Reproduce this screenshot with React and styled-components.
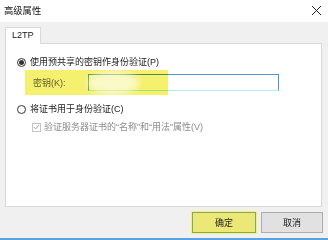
import React from 'react';
import styled, { createGlobalStyle } from 'styled-components';

const GlobalStyle = createGlobalStyle`
  html, body {
    margin: 0;
    padding: 0;
    background: #f0f0f0;
  }
  body {
    font-family: "Liberation Sans", "Noto Sans CJK SC", sans-serif;
    font-size: 9px;
    color: #222;
  }
`;

function App() {
  return (
    <Window>
      <GlobalStyle />
      <TitleBar>
        <Title>高级属性</Title>
        <CloseIcon width="11" height="11" viewBox="0 0 11 11">
          <path d="M1 1 L10 10 M10 1 L1 10" stroke="#222" strokeWidth="1" />
        </CloseIcon>
      </TitleBar>
      <Body>
        <TabStrip>
          <Tab>L2TP</Tab>
        </TabStrip>
        <Panel>
          <OptionRow>
            <Radio checked />
            <Label>使用预共享的密钥作身份验证(P)</Label>
          </OptionRow>
          <KeyRow>
            <KeyLabel>密钥(K):</KeyLabel>
            <KeyInput />
            <Blur />
            <Highlight />
          </KeyRow>
          <OptionRow $gap={9}>
            <Radio />
            <Label>将证书用于身份验证(C)</Label>
          </OptionRow>
          <CheckRow>
            <CheckBox>
              <svg width="8" height="8" viewBox="0 0 8 8">
                <path d="M1 4 L3 6.2 L7 1.5" fill="none" stroke="#9a9a9a" strokeWidth="1" />
              </svg>
            </CheckBox>
            <Label $disabled>验证服务器证书的“名称”和“用法”属性(V)</Label>
          </CheckRow>
        </Panel>
        <Footer>
          <Button $primary>确定</Button>
          <Button>取消</Button>
        </Footer>
      </Body>
      <BlueLine />
    </Window>
  );
}

export default App;

const Window = styled.div`
  width: 328px;
  height: 240px;
  display: flex;
  flex-direction: column;
  background: #f0f0f0;
  overflow: hidden;
`;

const TitleBar = styled.div`
  height: 22px;
  background: #fff;
  display: flex;
  align-items: center;
  justify-content: space-between;
  padding: 0 6px 2px 4px;
  box-sizing: border-box;
`;

const Title = styled.span`
  font-size: 9.3px;
  color: #111;
`;

const CloseIcon = styled.svg`
  display: block;
`;

const Body = styled.div`
  flex: 1;
  display: flex;
  flex-direction: column;
  padding: 5px 6px 0 5px;
`;

const TabStrip = styled.div`
  display: flex;
  height: 16px;
`;

const Tab = styled.div`
  width: 36px;
  height: 17px;
  box-sizing: border-box;
  background: #fff;
  border: 1px solid #d9d9d9;
  border-bottom: none;
  padding-left: 6px;
  line-height: 15px;
  font-size: 9px;
  position: relative;
  z-index: 1;
`;

const Panel = styled.div`
  height: 164px;
  box-sizing: border-box;
  background: #fff;
  border: 1px solid #d9d9d9;
  display: flex;
  flex-direction: column;
`;

const OptionRow = styled.div`
  display: flex;
  align-items: center;
  height: 10px;
  margin-top: ${p => p.$gap ?? 13}px;
  padding-left: 11px;
  gap: 4px;
`;

const Radio = styled.span`
  width: 9px;
  height: 9px;
  box-sizing: border-box;
  border-radius: 50%;
  border: 1px solid #333;
  display: flex;
  align-items: center;
  justify-content: center;
  &::after {
    content: '';
    width: 5px;
    height: 5px;
    border-radius: 50%;
    background: ${p => (p.checked ? '#333' : 'transparent')};
  }
`;

const Label = styled.span`
  line-height: 10px;
  white-space: nowrap;
  color: ${p => (p.$disabled ? '#8c8c8c' : '#222')};
`;

const KeyRow = styled.div`
  position: relative;
  display: flex;
  align-items: center;
  height: 25px;
  margin-top: 3px;
  margin-left: 19px;
  padding-left: 8px;
`;

const KeyLabel = styled.span`
  width: 55px;
  color: #666;
  white-space: nowrap;
`;

const KeyInput = styled.div`
  width: 191px;
  height: 17px;
  box-sizing: border-box;
  background: #fff;
  border: 1px solid #4f97cf;
  border-bottom-color: #a9f0f7;
`;

const Highlight = styled.div`
  position: absolute;
  left: 0;
  top: 0;
  width: 143px;
  height: 25px;
  background: #f5f06e;
  mix-blend-mode: multiply;
  pointer-events: none;
`;

const Blur = styled.div`
  position: absolute;
  left: 62px;
  top: 1px;
  width: 52px;
  height: 24px;
  border-radius: 50%;
  background: #fff;
  filter: blur(3px);
  opacity: 0.6;
  z-index: 2;
`;

const CheckRow = styled.div`
  display: flex;
  align-items: center;
  height: 10px;
  margin-top: 8px;
  padding-left: 26px;
  gap: 3px;
`;

const CheckBox = styled.span`
  width: 9px;
  height: 9px;
  box-sizing: border-box;
  border: 1px solid #c4c4c4;
  display: flex;
  align-items: center;
  justify-content: center;
`;

const Footer = styled.div`
  flex: 1;
  display: flex;
  justify-content: flex-end;
  align-items: flex-start;
  padding-top: 5px;
  gap: 5px;
`;

const Button = styled.div`
  width: ${p => (p.$primary ? 64 : 62)}px;
  height: 21px;
  box-sizing: border-box;
  display: flex;
  align-items: center;
  justify-content: center;
  font-size: 9px;
  background: ${p => (p.$primary ? '#ebe878' : '#e1e1e1')};
  border: 1px solid ${p => (p.$primary ? '#86a85c' : '#adadad')};
  box-shadow: ${p => (p.$primary ? '0 0 0 1px #f4f07a' : 'none')};
  margin-right: ${p => (p.$primary ? 0 : -1)}px;
`;

const BlueLine = styled.div`
  height: 2px;
  background: #5ba2e0;
`;
